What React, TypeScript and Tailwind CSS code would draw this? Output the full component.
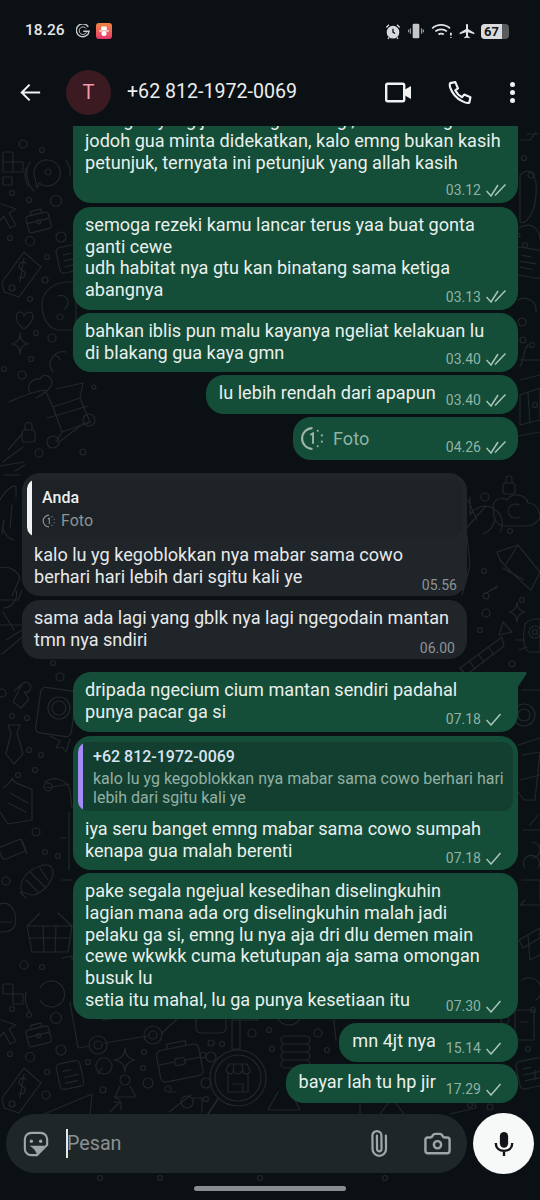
import type { ReactNode } from 'react';
import { Camera, Paperclip } from 'lucide-react';

// little scattered rings of the wallpaper: x, y, r in page pixels
const rings = [
  [23, 144, 4], [42, 150, 2.5], [12, 193, 2.5], [29, 200, 2.5], [56, 201, 5.5], [10, 238, 2.5], [30, 241, 4.5],
  [61, 237, 5], [47, 257, 2.5], [45, 280, 3], [30, 299, 2.5], [36, 333, 2.5], [52, 338, 4], [31, 359, 2.5],
  [22, 375, 4], [4, 369, 2.5], [39, 453, 4], [83, 452, 3], [94, 387, 2], [60, 605, 2.5], [60, 677, 4], [53, 663, 2.5],
  [2, 693, 4], [27, 718, 2.5], [12, 716, 2.5], [29, 750, 2.5], [41, 755, 2.5], [18, 775, 2.5], [35, 770, 2.5],
  [48, 787, 4], [36, 832, 4], [45, 852, 2.5], [58, 856, 2.5], [6, 881, 4], [24, 965, 4], [42, 967, 2.5],
  [12, 1009, 2.5], [29, 1015, 2.5], [56, 1018, 5.5], [10, 1054, 2.5], [30, 1057, 4.5], [61, 1050, 5], [47, 1072, 2.5],
  [46, 1095, 4], [88, 1062, 2.5], [103, 1090, 3], [144, 1052, 2.5], [143, 1068, 2.5], [148, 1083, 5], [211, 1043, 3],
  [203, 1055, 3], [211, 1057, 5], [222, 1044, 2.5], [206, 1083, 5], [206, 1099, 2.5], [252, 1033, 4], [269, 1030, 2.5],
  [272, 1049, 2.5], [327, 1050, 2.5], [318, 1033, 4], [505, 1020, 4], [533, 1010, 2.5], [528, 1049, 2.5],
  [524, 158, 2.5], [531, 175, 3], [525, 245, 2.5], [518, 235, 2], [523, 340, 3], [532, 345, 2.5], [535, 405, 2.5],
  [485, 497, 4], [510, 531, 2.5], [484, 571, 2.5], [486, 596, 3], [486, 613, 4], [480, 630, 2.5], [512, 664, 3],
  [522, 600, 2.5], [470, 1105, 2.5], [490, 1107, 3], [100, 1178, 2.5], [160, 1178, 2.5], [260, 1178, 2.5], [385, 1178, 2.5],
];

function Doodles() {
  return (
    <svg className="absolute inset-0" width="540" height="1074" viewBox="0 126 540 1074" fill="none" stroke="#22272a" strokeWidth="1.2" strokeLinecap="round" strokeLinejoin="round">
      {rings.map(([x, y, r], i) => (
        <circle key={i} cx={x} cy={y} r={r} />
      ))}
      {/* tetris */}
      <path d="M3 152 H13 V162 H23 V172 H13 V162 H3 Z M3 162 V172 H13 M3 177 H12 V185 H3 Z" />
      <path d="M3 984 H13 V994 H23 V1004 H13 V994 H3 Z" />
      {/* speech bubble with waves */}
      <path d="M48 160 A13 13 0 1 1 39 183 L37 188 L35 178 A13 13 0 0 1 48 160 Z M48 169 A3 3 0 1 0 48.1 169" />
      <path d="M30 162 A24 24 0 0 0 34 191 M66 160 A24 24 0 0 1 70 176 M26 168 A24 24 0 0 0 28 186" />
      <path d="M40 988 A13 13 0 1 1 40 1000 M26 992 A24 24 0 0 0 30 1012" />
      {/* cursor arrows */}
      <path d="M1 204 L16 209 L9 213 L16 225 L10 228 L4 216 L-1 222" />
      <path d="M1 1020 L16 1025 L9 1029 L16 1041 L10 1044 L4 1032 L-1 1038" />
      {/* small cases */}
      <g transform="rotate(-14 38 222)">
        <rect x="27" y="214" width="23" height="17" rx="3" />
        <path d="M33 214 V210 H44 V214 M27 221 H50" />
        <circle cx="38.5" cy="222" r="2" />
      </g>
      <g transform="rotate(-14 38 1036)">
        <rect x="27" y="1028" width="23" height="17" rx="3" />
        <path d="M33 1028 V1024 H44 V1028 M27 1035 H50" />
        <circle cx="38.5" cy="1036" r="2" />
      </g>
      {/* price tags */}
      <g>
        <path d="M24 252 L41 267 L19 297 L4 292 L2 282 Z" />
        <circle cx="12" cy="288" r="3" />
        <path d="M26 263 C20 260 16 267 22 270 C28 273 25 280 19 277 M24 258 L20 282" />
      </g>
      <g transform="translate(0 816)">
        <path d="M24 252 L41 267 L19 297 L4 292 L2 282 Z" />
        <circle cx="12" cy="288" r="3" />
        <path d="M26 263 C20 260 16 267 22 270 C28 273 25 280 19 277 M24 258 L20 282" />
      </g>
      {/* note squares */}
      <g transform="rotate(-12 70 1075)">
        <rect x="58" y="1062" width="24" height="26" rx="4" />
        <path d="M64 1070 H72 M64 1076 H78 M64 1082 H76" />
      </g>
      <g transform="rotate(-12 528 1075)">
        <rect x="518" y="1060" width="26" height="28" rx="4" />
        <path d="M524 1068 H532 M524 1074 H540 M524 1080 H538" />
      </g>
      <g transform="rotate(-12 68 260)">
        <rect x="58" y="246" width="24" height="26" rx="4" />
        <path d="M64 254 H72 M64 260 H78 M64 266 H76" />
      </g>
      <g transform="rotate(10 525 262)">
        <rect x="515" y="248" width="28" height="28" rx="4" />
        <path d="M521 256 H530 M521 262 H536 M521 268 H534" />
      </g>
      {/* heart, sparkle, lock */}
      <path d="M24 329 C14 322 15 313 20 312 C23 312 24 314 24 316 C25 314 27 312 30 312 C35 313 34 322 24 329 Z" />
      <path d="M20 333 C20 340 22 342 28 344 C22 345 20 348 20 354 C20 348 17 345 12 344 C17 342 20 340 20 333 Z" />
      <path d="M125 1048 C125 1056 129 1059 135 1060 C129 1061 125 1064 125 1072 C125 1064 121 1061 114 1060 C121 1059 125 1056 125 1048 Z" />
      <path d="M517 602 C517 608 520 611 525 612 C520 613 517 616 517 622 C517 616 514 613 509 612 C514 611 517 608 517 602 Z" />
      <rect x="22" y="430" width="13" height="12" rx="3" />
      <path d="M25 430 V426 A3.5 3.5 0 0 1 32 426 V430" />
      <rect x="503" y="483" width="12" height="11" rx="3" />
      <path d="M506 483 V479 A3 3 0 0 1 512 479 V483" />
      {/* headset blob */}
      <path d="M42 305 C42 290 55 282 68 282 H76 V330 H60 C50 330 42 320 42 305 Z M58 296 A7 7 0 0 1 64 309 M60 314 A3 3 0 1 0 60.1 314" />
      <path d="M518 300 A12 12 0 0 1 536 312 M522 318 A4 4 0 1 0 522.1 318" />
      {/* cart, top */}
      <path d="M9 402 C18 398 30 392 45 390 L53 407 L80 398 L83 383 L56 389 M53 407 L62 432 L90 422 L80 398 M47 418 L88 406" />
      <path d="M30 393 C26 385 32 378 40 379 C44 372 52 376 52 384 C50 390 40 396 36 398" />
      <path d="M62 432 L56 442 M90 422 L86 424" />
      <circle cx="53" cy="442" r="6" />
      <circle cx="89" cy="420" r="6" />
      <path d="M59 442 L83 424" />
      <path d="M53 372 C45 362 55 350 66 352 M55 356 A5 5 0 0 1 60 360" />
      <path d="M8 450 L22 434 M8 458 L23 447 M0 466 L24 462" />
      <path d="M15 471 L25 465 M3 462 L8 458" />
      {/* cart, bottom */}
      <path d="M70 1002 L78 1048 L90 1046 M104 1043 L148 1036 M162 1033 L178 1018 V1002" />
      <circle cx="98" cy="1045" r="9" />
      <circle cx="98" cy="1045" r="4" />
      <circle cx="153" cy="1035" r="9" />
      <circle cx="153" cy="1035" r="4" />
      <path d="M100 1002 L103 1020 L137 1014 L135 1002 M108 1008 L110 1020 M120 1006 L122 1018" />
      {/* magnifier and stuff on bottom */}
      <path d="M98 1086 A8 8 0 1 0 97.9 1086 M96 1080 L92 1086" transform="translate(6 -12)" />
      <g transform="rotate(-11 180 1062)">
        <rect x="158" y="1047" width="43" height="32" rx="5" />
        <path d="M170 1047 V1042 H189 V1047 M158 1061 H175 M185 1061 H201" />
        <rect x="175" y="1058" width="10" height="7" rx="2" />
      </g>
      <path d="M125 1075 A5 5 0 1 1 125 1085 A5 5 0 1 1 125 1075 M120 1086 L115 1097 H136 L130 1086 M114 1097 L120 1100" />
      <circle cx="238" cy="1078" r="28" />
      <circle cx="238" cy="1078" r="23" />
      <path d="M218 1099 L208 1114" strokeWidth="2" />
      <path d="M226 1070 L229 1064 H247 L250 1070 C250 1075 244 1075 242 1071 C240 1075 236 1075 234 1071 C232 1075 228 1075 226 1070 Z M228 1075 V1092 H248 V1075 M233 1084 H243 V1092 M234 1064 L233 1071 M242 1064 L243 1071" />
      <path d="M163 1114 L185 1097 M181 1098 A6 6 0 1 0 181.1 1098 M170 1094 H162 A3 3 0 1 0 161.9 1094 M186 1100 H196 V1114" transform="translate(6 -2)" />
      <path d="M110 1112 L120 1102 M114 1102 H121 V1110" />
      <path d="M44 1114 L92 1094 L90 1114" />
      {/* coin stack, stand */}
      <path d="M285 1036 H306 A4 4 0 0 1 306 1044 H285 A4 4 0 0 1 285 1036 Z M285 1044 H306 A4 4 0 0 1 306 1052 H285 A4 4 0 0 1 285 1044 Z M285 1052 H306 A4 4 0 0 1 306 1060 H285 A4 4 0 0 1 285 1052 Z M285 1060 H306 A4 4 0 0 1 306 1068 H285 A4 4 0 0 1 285 1060 Z" />
      <path d="M232 1020 V1049 H240 V1020 M196 1002 V1028 C196 1032 198 1033 202 1033 H220 C224 1033 226 1032 226 1028 V1002 M232 1020 H258 V1002" />
      <path d="M278 1019 A13 13 0 0 0 300 1019 M289 1019 A6 6 0 0 0 289 1007" />
      <path d="M290 1090 L300 1110 H268 L278 1092" />
      <path d="M332 1002 L336 1040 M342 1100 H360 V1114 M380 1114 L392 1098 L404 1114" />
      <path d="M440 1090 L470 1080 L476 1108 L450 1114" />
      <path d="M515 1040 L534 1040 V1010 L515 1010 Z M520 1022 H528" />
      {/* left column, mid */}
      <path d="M22 684 A5 5 0 1 1 24 692 L29 699 L21 708 L13 702 Z M14 691 L22 684" />
      <rect x="38" y="689" width="36" height="46" rx="5" transform="rotate(8 56 712)" />
      <circle cx="59" cy="708" r="11" />
      <circle cx="59" cy="708" r="7" />
      <path d="M50 736 L60 741 L56 748 L62 747 L66 752 L70 739" />
      <path d="M8 725 H20 L17 733 L23 754 L14 764 L6 754 L11 733 Z" />
      <path d="M3 788 C8 784 12 781 12 778 C14 786 30 786 32 790 V820 L8 824 L0 812 M10 793 L28 803 M8 803 L26 812" />
      <rect x="0" y="843" width="25" height="13" rx="3" transform="rotate(-22 12 850)" />
      <path d="M22 842 L27 854" />
      <path d="M22 892 C18 880 28 870 40 866 C52 862 55 870 52 878 C48 888 36 898 28 894 Z M30 872 L46 888 M40 868 L48 880 M26 880 L38 892 M20 892 L26 898" />
      <path d="M0 904 C10 900 18 912 15 925 C13 932 5 932 0 932 M0 922 H12" />
      <path d="M27 926 L40 913 M58 913 L72 926 M27 926 H72 L68 952 H32 Z M43 926 L44 952 M56 926 L55 952 M30 938 H70" />
      <path d="M62 958 L72 956 V960" />
      <path d="M45 782 A16 16 0 0 1 70 790 L72 808 M46 788 L70 784" />
      <path d="M60 838 L66 838 M62 880 H72 M69 812 V870" />
      {/* left, incoming rows */}
      <path d="M0 500 C8 485 16 486 16 486 V497 M4 520 A15 15 0 0 0 14 540 M4 520 L2 534 M12 505 L10 528" />
      <path d="M0 600 L18 600 L22 590 M3 612 L14 630 M0 625 L22 625" />
      <path d="M4 608 A14 14 0 0 0 16 590 M6 640 L22 630 L26 634 L2 654" />
      <path d="M0 568 C10 565 18 572 20 578 L12 596" />
      <path d="M4 475 H20" />
      {/* right column */}
      <path d="M527 134 H538 M521 140 H530 L536 132" />
      <path d="M520 175 C530 165 538 175 536 195 C535 215 525 225 520 222 Z" />
      <path d="M519 228 C532 220 540 230 540 240" />
      <path d="M528 345 C522 352 525 360 520 366 M520 360 H540 M520 380 L540 375 M520 395 L540 388 V420 L520 425 Z M528 393 L530 423" />
      <path d="M518 436 L540 432" />
      <path d="M494 510 C490 500 502 496 507 500 C512 492 526 494 528 503 C536 503 540 510 540 518 C536 525 528 526 524 526 H504 C498 526 492 518 494 510 Z M519 505 A7 7 0 1 0 519 517" />
      <path d="M470 497 V515 M470 515 A17 17 0 1 1 500 532 M468 500 L477 520 M485 507 L462 533 M483 534 A20 20 0 0 0 495 520" />
      <path d="M467 535 L470 566 L462 595" />
      <path d="M497 552 L518 545 L540 572 L531 590 Q510 572 500 560 Z M503 568 L524 580 M518 545 L506 564" />
      <path d="M484 594 L492 590 L497 586 M490 590 L497 588" />
      <path d="M503 622 L512 632 L499 635 Z" />
      <path d="M525 624 C530 618 540 618 540 620 V652 H530 C524 652 522 640 525 624 Z" />
      <circle cx="535" cy="632" r="6" />
      <circle cx="535" cy="632" r="2.5" />
      <path d="M515 640 H523 M519 650 L527 647" />
      <path d="M502 637 L460 668 L466 675 L504 646 Z M489 648 L494 655 M479 655 L484 662 M470 662 L475 669" />
      <path d="M522 690 H540 M518 745 L540 738 M522 755 L540 752 L535 800 H524 L518 792 M520 780 L540 775" />
      <circle cx="524" cy="715" r="11" />
      <circle cx="524" cy="715" r="6" />
      <path d="M523 830 H540 M532 842 A8 8 0 1 1 532 858 M530 825 L538 815 M525 868 A8 8 0 1 1 538 868" />
      <path d="M522 880 H540 V900 M525 900 L520 905 H540" />
      <path d="M519 940 L540 928 V938 L523 948 Z M528 935 L530 960 L540 955" />
      <path d="M522 980 A12 12 0 0 1 536 1000" />
      <path d="M535 1070 V1080" />
    </svg>
  );
}

function Ticks({ double = true }: { double?: boolean }) {
  return (
    <svg width="20" height="13" viewBox="0 0 20 13" fill="none" stroke="#a9c6b9" strokeWidth="1.5" className="shrink-0">
      {double ? (
        <>
          <path d="M0.5 7 L5 12 L12 1" />
          <path d="M9 11.5 L19.5 0.5" />
        </>
      ) : (
        <path d="M0.5 7 L5 12 L14.5 1" />
      )}
    </svg>
  );
}

function Meta({ time, double, dim }: { time: string; double?: boolean; dim?: boolean }) {
  return (
    <span className={`flex items-center gap-[5px] text-[14px] leading-[18px] ${dim ? 'text-[#8d9396]' : 'text-[#8fb3a4]'}`}>
      {time}
      {!dim && <Ticks double={double} />}
    </span>
  );
}

function Out({ children, time, double, className = '' }: { children: ReactNode; time: string; double?: boolean; className?: string }) {
  return (
    <div className={`w-[445px] shrink-0 self-end rounded-[18px] bg-[#144d38] px-[12px] pt-[7px] text-[18.1px] leading-[21.7px] text-[#e9f0ed] ${className}`}>
      {children}
      <div className="-mt-[13px] flex justify-end pb-[4px]">
        <Meta time={time} double={double} />
      </div>
    </div>
  );
}

function Short({ text, time, double, className = '' }: { text: string; time: string; double?: boolean; className?: string }) {
  return (
    <div className={`flex h-[39px] shrink-0 self-end rounded-[18px] bg-[#144d38] pl-[13px] pr-[12px] text-[18.1px] leading-[21.7px] text-[#e9f0ed] ${className}`}>
      <span className="pt-[7px]">{text}</span>
      <span className="ml-[10px] pt-[16px]">
        <Meta time={time} double={double} />
      </span>
    </div>
  );
}

function TimerIcon({ size, color }: { size: number; color: string }) {
  return (
    <svg width={size} height={size} viewBox="0 0 24 24" fill="none" stroke={color} strokeWidth="2" className="shrink-0">
      <path d="M12 2 A10 10 0 0 0 12 22" />
      <path d="M10 8.5 L12.5 7 V17" strokeWidth="1.8" />
      <circle cx="17" cy="4.5" r="1" fill={color} stroke="none" />
      <circle cx="21" cy="9" r="1" fill={color} stroke="none" />
      <circle cx="21" cy="15" r="1" fill={color} stroke="none" />
      <circle cx="17" cy="19.5" r="1" fill={color} stroke="none" />
    </svg>
  );
}

function StatusBar() {
  return (
    <div className="flex h-[60px] shrink-0 items-center justify-between pl-[25px] pr-[31px] pt-[2px]">
      <div className="flex items-center">
        <span className="w-[39px] text-[15.5px] font-medium text-[#e4e6e7]">18.26</span>
        <svg width="14" height="14" viewBox="0 0 24 24" fill="none" stroke="#c9cbcc" strokeWidth="2.4" className="ml-[12px]">
          <path d="M21 5 A11 11 0 1 0 22.5 12.5 H12.5" />
          <path d="M17.5 8 A6.5 6.5 0 1 0 18 14" strokeWidth="1.6" />
        </svg>
        <span className="ml-[6px] flex h-[16px] w-[16px] items-center justify-center rounded-[3px] bg-gradient-to-b from-[#f0853f] to-[#e8336d]">
          <svg width="12" height="12" viewBox="0 0 24 24" fill="#fff">
            <path d="M2 11 H22 V13 H2 Z M7 3 H17 L18 10 H6 Z" />
            <circle cx="12" cy="17" r="5" />
          </svg>
        </span>
      </div>
      <div className="flex items-center">
        <svg width="16" height="17" viewBox="0 0 24 24" fill="#d8dadb" stroke="#d8dadb" strokeWidth="2">
          <circle cx="12" cy="13" r="8.5" />
          <path d="M2 6 L6 2 M22 6 L18 2 M6 21 L4.5 23 M18 21 L19.5 23" fill="none" />
          <path d="M12 8 V13 L15 15" stroke="#0b1014" fill="none" />
        </svg>
        <svg width="16" height="16" viewBox="0 0 24 24" fill="none" className="ml-[7px]">
          <rect x="7" y="1" width="10" height="22" rx="2" fill="#c3c5c6" />
          <path d="M3.5 8 V16 M20.5 8 V16 M1 10 V14 M23 10 V14" stroke="#c3c5c6" strokeWidth="1.4" />
        </svg>
        <svg width="22" height="16" viewBox="0 0 24 18" fill="none" stroke="#e0e2e3" strokeWidth="2" className="ml-[7px]">
          <path d="M1 6 A15 15 0 0 1 21 6" />
          <path d="M4.5 9.5 A10 10 0 0 1 17.5 9.5" />
          <path d="M8 13 A5 5 0 0 1 14 13" />
          <path d="M22 11 V14 M22 16 V17" />
        </svg>
        <svg width="16" height="16" viewBox="0 0 24 24" fill="#e0e2e3" className="ml-[6px]">
          <path d="M10.5 2.5 C10.5 1 13.5 1 13.5 2.5 V9 L23 14.5 V17 L13.5 14 V19.5 L16 21.5 V23 L12 22 L8 23 V21.5 L10.5 19.5 V14 L1 17 V14.5 L10.5 9 Z" />
        </svg>
        <span className="ml-[6px] flex h-[15px] w-[28px] items-center overflow-hidden rounded-[4px] bg-[#5a5d5f]">
          <span className="flex h-full w-[21px] items-center justify-center bg-[#d9dbdc] text-[13px] font-bold leading-none text-[#15181a]">67</span>
        </span>
      </div>
    </div>
  );
}

function Header() {
  return (
    <div className="flex h-[66px] shrink-0 items-center pb-[2px] pl-[20px] pr-[25px]">
      <svg width="21" height="21" viewBox="0 0 24 24" fill="none" stroke="#f1f3f3" strokeWidth="2.3" className="shrink-0">
        <path d="M23 12 H2 M11 3 L2 12 L11 21" />
      </svg>
      <div className="ml-[25px] flex h-[45px] w-[45px] shrink-0 items-center justify-center rounded-full bg-[#3b1a22] text-[20px] text-[#f29ba7]">T</div>
      <div className="ml-[16px] flex-1 text-[19.6px] text-[#eceeee]">+62 812-1972-0069</div>
      <svg width="27" height="21" viewBox="0 0 27 21" fill="none" stroke="#f1f3f3" strokeWidth="2.4" className="mr-[35px] shrink-0">
        <rect x="1.2" y="1.7" width="18" height="17.6" rx="1.5" />
        <path d="M20 7.5 L26 4 V17 L20 13.5 Z" fill="#f1f3f3" stroke="none" />
      </svg>
      <svg width="25" height="25" viewBox="0 0 24 24" fill="none" stroke="#f1f3f3" strokeWidth="2.1" strokeLinejoin="round" className="mr-[38px] shrink-0">
        <path d="M3 3 L8 2 L10.5 8 L8 10 C9.5 13 11.5 15 14.5 16.5 L16.5 14 L22.5 16.5 L21.5 21.5 C20.5 22.5 18 22 15 20.5 C9 17.5 5 13 3 7 C2.5 5 2.5 4 3 3 Z" />
      </svg>
      <div className="flex shrink-0 flex-col gap-[3px]">
        <span className="h-[5px] w-[5px] rounded-full bg-[#f1f3f3]" />
        <span className="h-[5px] w-[5px] rounded-full bg-[#f1f3f3]" />
        <span className="h-[5px] w-[5px] rounded-full bg-[#f1f3f3]" />
      </div>
    </div>
  );
}

function Composer() {
  return (
    <div className="flex shrink-0 items-center pl-[6px] pr-[5px]">
      <div className="flex h-[59px] w-[461px] items-center rounded-[30px] bg-[#1f2628] pl-[17px] pr-[15px]">
        <svg width="26" height="26" viewBox="0 0 28 28" fill="none" stroke="#a0a5a7" strokeWidth="2.3" className="shrink-0">
          <path d="M9 2 H19 C23 2 26 5 26 9 V15 L15 26 H9 C5 26 2 23 2 19 V9 C2 5 5 2 9 2 Z" />
          <circle cx="9" cy="11" r="1.8" fill="#a0a5a7" stroke="none" />
          <circle cx="19" cy="11" r="1.8" fill="#a0a5a7" stroke="none" />
          <path d="M7 16 H24 L15 25 C14 22 11 18 7 16 Z" fill="#a0a5a7" stroke="none" />
        </svg>
        <span className="ml-[17px] h-[29px] w-[2px] shrink-0 bg-[#e6e8e8]" />
        <span className="-ml-[1px] flex-1 text-[19.7px] text-[#8b9093]">Pesan</span>
        <Paperclip size={27} strokeWidth={2} className="mr-[31px] shrink-0 rotate-[-45deg] text-[#a0a5a7]" />
        <Camera size={29} strokeWidth={2} className="shrink-0 text-[#a0a5a7]" />
      </div>
      <div className="ml-[6px] flex h-[61px] w-[61px] shrink-0 items-center justify-center rounded-full bg-[#f7f8f8]">
        <svg width="22" height="26" viewBox="0 0 24 28" fill="none" stroke="#111517" strokeWidth="2.6">
          <rect x="7.5" y="1" width="9" height="17" rx="4.5" fill="#111517" stroke="none" />
          <path d="M3 13 C3 18.5 7 21.5 12 21.5 C17 21.5 21 18.5 21 13 M12 21.5 V27" />
        </svg>
      </div>
    </div>
  );
}

export default function App() {
  return (
    <div className="flex h-[1200px] w-[540px] flex-col overflow-hidden bg-[#0b1014] font-['Roboto',sans-serif]">
      <StatusBar />
      <Header />
      <div className="relative flex-1 overflow-hidden">
        <Doodles />
        <div className="relative flex h-full flex-col gap-[3px] px-[22px]">
          <Out time="03.12" double className="-mt-[17.5px] !pt-0">
            <div className="whitespace-nowrap">kalo gua yang jadi orang baik lagi, kalo emang dia</div>
            <div className="whitespace-nowrap">jodoh gua minta didekatkan, kalo emng bukan kasih</div>
            <div>petunjuk, ternyata ini petunjuk yang allah kasih</div>
            <div className="h-[20.4px]" />
          </Out>
          <Out time="03.13" double className="mt-[1px]">
            <div>semoga rezeki kamu lancar terus yaa buat gonta<br />ganti cewe<br />udh habitat nya gtu kan binatang sama ketiga<br />abangnya</div>
          </Out>
          <Out time="03.40" double>
            <div>bahkan iblis pun malu kayanya ngeliat kelakuan lu<br />di blakang gua kaya gmn</div>
          </Out>
          <Short text="lu lebih rendah dari apapun" time="03.40" double />
          <div className="flex h-[43px] w-[225px] shrink-0 self-end rounded-[18px] bg-[#144d38] pl-[7px] pr-[12px]">
            <div className="flex h-[42px] flex-1 items-center gap-[8px]">
              <TimerIcon size={25} color="#a3b5ad" />
              <span className="text-[18.1px] text-[#8fb3a4]">Foto</span>
            </div>
            <div className="pt-[21px]">
              <Meta time="04.26" double />
            </div>
          </div>

          <div className="mt-[10px] h-[123px] w-[445px] shrink-0 rounded-[18px] bg-[#1f2529] px-[5px] pt-[6px] text-[18.1px] leading-[21.7px] text-[#e7e9ea]">
            <div className="flex h-[58px] overflow-hidden rounded-[10px] bg-[#1c2225]">
              <span className="w-[5px] shrink-0 rounded-l-[6px] bg-[#f1f3f3]" />
              <div className="pl-[10px] pt-[8px]">
                <div className="text-[16px] font-medium leading-[22px] text-[#eceeee]">Anda</div>
                <div className="flex items-center gap-[5px] pt-[1px] text-[16px] leading-[22px] text-[#8d9396]">
                  <TimerIcon size={14} color="#8d9396" />
                  Foto
                </div>
              </div>
            </div>
            <div className="pl-[7px] pt-[7px]">kalo lu yg kegoblokkan nya mabar sama cowo<br />berhari hari lebih dari sgitu kali ye</div>
            <div className="-mt-[11.4px] flex justify-end pr-[5px]">
              <Meta time="05.56" dim />
            </div>
          </div>
          <div className="mt-[1px] h-[59px] w-[445px] shrink-0 rounded-[18px] bg-[#1f2529] px-[12px] pt-[7px] text-[18.1px] leading-[21.7px] text-[#e7e9ea]">
            <div>sama ada lagi yang gblk nya lagi ngegodain mantan<br />tmn nya sndiri</div>
            <div className="-mt-[11.4px] flex justify-end">
              <Meta time="06.00" dim />
            </div>
          </div>

          <div className="relative mt-[10px] h-[60px] w-[445px] shrink-0 self-end rounded-[18px] rounded-tr-none bg-[#144d38] px-[12px] pt-[7px] text-[18.1px] leading-[21.7px] text-[#e9f0ed]">
            <svg width="10" height="16" viewBox="0 0 10 16" className="absolute -right-[9px] top-0">
              <path d="M0 0 H7.5 C10 0 10 2 8.5 3.5 L0 16 Z" fill="#144d38" />
            </svg>
            <div>dripada ngecium cium mantan sendiri padahal<br />punya pacar ga si</div>
            <div className="-mt-[12.4px] flex justify-end">
              <Meta time="07.18" double={false} />
            </div>
          </div>
          <div className="mt-[1px] h-[134px] w-[445px] shrink-0 self-end rounded-[18px] bg-[#144d38] px-[5px] pt-[6px] text-[18.1px] leading-[21.7px] text-[#e9f0ed]">
            <div className="flex h-[69px] overflow-hidden rounded-[10px] bg-[#123f2f]">
              <span className="w-[5px] shrink-0 rounded-l-[6px] bg-[#a48bf5]" />
              <div className="pl-[10px] pt-[4px]">
                <div className="text-[16px] font-medium leading-[22px] text-[#dbe4f2]">+62 812-1972-0069</div>
                <div className="pt-[1px] text-[16px] leading-[19px] text-[#92b0a4]">kalo lu yg kegoblokkan nya mabar sama cowo berhari hari<br />lebih dari sgitu kali ye</div>
              </div>
            </div>
            <div className="pl-[7px] pt-[7px]">iya seru banget emng mabar sama cowo sumpah<br />kenapa gua malah berenti</div>
            <div className="-mt-[12.4px] flex justify-end pr-[7px]">
              <Meta time="07.18" double={false} />
            </div>
          </div>
          <Out time="07.30" double={false}>
            <div>pake segala ngejual kesedihan diselingkuhin<br />lagian mana ada org diselingkuhin malah jadi<br />pelaku ga si, emng lu nya aja dri dlu demen main<br />cewe wkwkk cuma ketutupan aja sama omongan<br />busuk lu<br />setia itu mahal, lu ga punya kesetiaan itu</div>
          </Out>
          <Short text="mn 4jt nya" time="15.14" double={false} className="mt-[1px]" />
          <Short text="bayar lah tu hp jir" time="17.29" double={false} className="-mt-[1px]" />
          <div className="-mx-[22px] mt-[6.6px]">
            <Composer />
          </div>
          <div className="mt-[9px] flex shrink-0 justify-center">
            <span className="h-[5px] w-[152px] rounded-full bg-[#8a8d90]" />
          </div>
        </div>
      </div>
    </div>
  );
}
